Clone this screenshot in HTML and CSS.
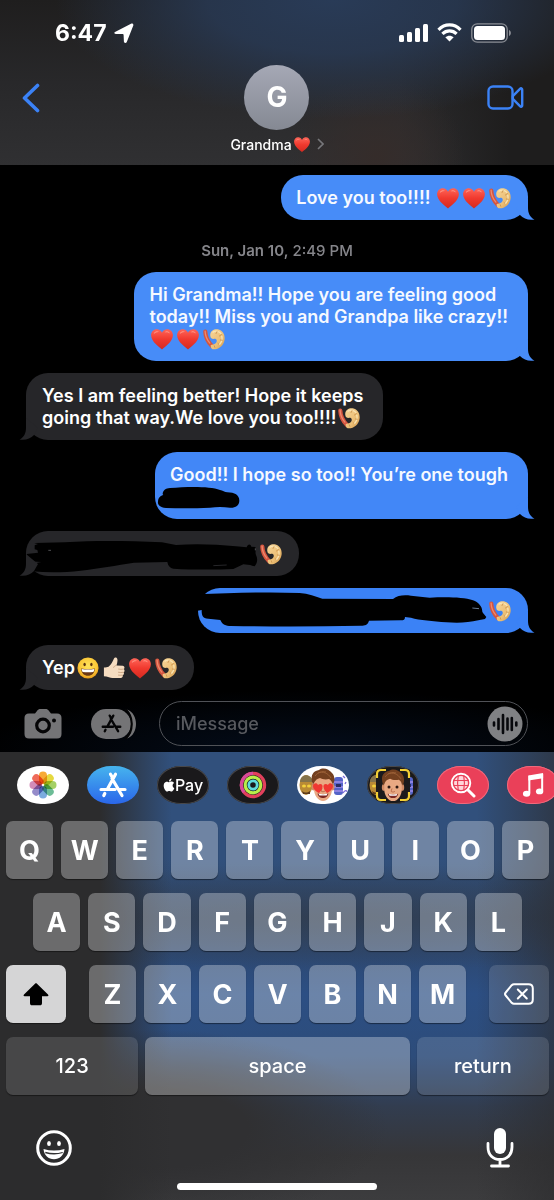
FILE: index.html
```html
<!DOCTYPE html>
<html lang="en">

<head>
	<meta charset="utf-8">
	<meta name="viewport" content="width=device-width, initial-scale=1">
	<title>Grandma</title>
	<link rel="stylesheet" href="styles.css">
</head>

<body>

	<!-- shared shapes -->
	<svg class="defs" width="0" height="0" aria-hidden="true">
		<defs>
			<linearGradient id="heart_fill" x1="0" y1="0" x2="0" y2="1">
				<stop offset="0" stop-color="#ff6558"/>
				<stop offset=".5" stop-color="#f0392e"/>
				<stop offset="1" stop-color="#d42a20"/>
			</linearGradient>
			<linearGradient id="shrimp_fill" x1="0" y1="0" x2="1" y2="1">
				<stop offset="0" stop-color="#f6d598"/>
				<stop offset=".6" stop-color="#ecbf76"/>
				<stop offset="1" stop-color="#d09648"/>
			</linearGradient>
			<radialGradient id="smile_fill" cx=".5" cy=".4" r=".6">
				<stop offset="0" stop-color="#ffe45c"/>
				<stop offset=".7" stop-color="#fbc736"/>
				<stop offset="1" stop-color="#e89a1c"/>
			</radialGradient>
		</defs>
		<symbol id="heart" viewBox="0 0 24 24">
			<path d="M12 23.500C9.500 21 .3 15.500.1 8 0 4 2.900 1.300 6.300 1.300c2.600 0 4.700 1.400 5.700 3.800 1-2.400 3.100-3.800 5.700-3.800 3.400 0 6.300 2.700 6.200 6.700-.2 7.500-9.400 13-11.900 15.500z" fill="url(#heart_fill)"/>
			<path d="M3 6.500C3.700 3.800 6.500 2.800 8.800 4.400 6.200 4.200 4.600 5 3 6.500zM14.800 4.800c2-2 4.800-1.300 5.800 1.200-1.600-1.400-3.600-1.700-5.800-1.200z" fill="#ff9c8c"/>
		</symbol>
		<symbol id="shrimp" viewBox="0 0 24 24">
			<path d="M2.500 4c.2 6 3 11.500 7.500 16" fill="none" stroke="#d4553f" stroke-width="4.600" stroke-linecap="round"/>
			<path d="M2.300 3.500c.2 5 2.200 9.500 5.200 13" fill="none" stroke="#ee8a6e" stroke-width="1.400" stroke-linecap="round"/>
			<path d="M8 9C7 3 12.500.5 17 1.500c5 1.300 7.300 6.500 6.500 11.500-1 6-6 10.200-11.500 10.300-2.600 0-4-2-3.500-4.800 3.500 0 6.500-1.500 6.500-4.500 0-2-2-2.500-3.500-2C9.500 12 8.200 11 8 9z" fill="url(#shrimp_fill)"/>
			<path d="M11 4.500c3-2 7-1 8.500 1.500M20.500 9c.8 3-.2 6.500-2.500 9" fill="none" stroke="#fae5b4" stroke-width="1.400" stroke-linecap="round"/>
			<path d="M15.500 3.500l-1.500 3M20.500 7l-3 2M21.500 13.500l-3-.5M18 18.500l-2-2M13 21.500l-.8-2.500" stroke="#c68c46" stroke-width=".8" fill="none"/>
		</symbol>
		<symbol id="smile" viewBox="0 0 24 24">
			<circle cx="12" cy="12" r="11.500" fill="url(#smile_fill)"/>
			<ellipse cx="8.300" cy="8.300" rx="1.300" ry="1.900" fill="#5c3210"/>
			<ellipse cx="15.700" cy="8.300" rx="1.300" ry="1.900" fill="#5c3210"/>
			<path d="M4.500 12.500c5 1 10 1 15 0C19.500 17.500 16 20.500 12 20.500S4.500 17.500 4.500 12.500z" fill="#6b3714"/>
			<path d="M5 13c5 1 9 1 14 0-.1 1.400-.6 2.500-1.200 3.300-3.500.6-8 .6-11.600 0C5.500 15.500 5.100 14.400 5 13z" fill="#fff"/>
		</symbol>
		<symbol id="thumb" viewBox="0 0 24 24">
			<path d="M1 11.500C3 11.300 5 11 6 10.500 9 8 10.500 5 12 1.500c.7-1.400 3-1.200 3.600.6.600 2.300-.2 4.800-.9 7.100l6.800.4c2 .2 2.600 2.600 1.100 3.600 1.300 1 1.200 2.900-.2 3.500.9 1.200.4 2.700-1 3.100.6 1.400-.2 2.900-1.900 3-4.500.3-9.500.3-13-.8-2-.6-3.800-.9-5.500-.9z" fill="#f5dcc0"/>
			<path d="M22.600 13.200c-2 .4-4 .3-6-.1M22.400 16.700c-2 .4-4 .3-6-.1M21.400 19.800c-2 .3-3.500.2-5-.1M14.700 9.200c-1.600.2-2.700 1-3.200 2.500" stroke="#c79f7c" stroke-width=".9" fill="none"/>
		</symbol>
		<symbol id="tail" viewBox="0 0 24 22">
			<path d="M16 0v10c0 5 2 9.500 6.500 11.500-5.500 1-11-.5-14.500-4.500L4 10z"/>
		</symbol>
		<symbol id="store_a" viewBox="0 0 28 26">
			<g fill="none" stroke="currentColor" stroke-width="3.200" stroke-linecap="round">
				<path d="M11.500 2.200l1.800 3M16.500 2.200L8.500 17M13 6.500l10 17M2 17.500h14M20.500 17.500H26M5.800 21.500l-1 2"/>
			</g>
		</symbol>
		<symbol id="memoji_friends" viewBox="0 0 52 38">
			<ellipse cx="9" cy="19" rx="6.500" ry="10" fill="#b98a35"/>
			<path d="M3 16c0-9 12-9 13 0z" fill="#85734a"/>
			<ellipse cx="7" cy="20" rx="2" ry="1.600" fill="#f3d03c"/>
			<ellipse cx="12" cy="20" rx="2" ry="1.600" fill="#f3d03c"/>
			<path d="M5 25c3 2 5 2 8 0v3H6z" fill="#5b3a1c"/>
			<rect x="37" y="11" width="9" height="18" rx="3" fill="#5463c7"/>
			<path d="M37 16h9M37 21h9M37 25h9" stroke="#9f8ce8" stroke-width="1.500"/>
			<path d="M39 18h5v3h-5z" fill="#2a2c60"/>
		</symbol>
		<symbol id="memoji" viewBox="0 0 26 34">
			<ellipse cx="3.500" cy="19" rx="2" ry="3.500" fill="#d28b65"/>
			<ellipse cx="22.500" cy="19" rx="2" ry="3.500" fill="#d28b65"/>
			<path d="M4 12c0-5 18-5 18 0v9c0 6-4 12-9 12S4 27 4 21z" fill="#e9a983"/>
			<path d="M3 17C0 9 2 3 9 2c4-3 10-1 13 3 3 3 3 8 1 12-1-3-2-5-4-6-4 1-7 0-9-1-4 1-5 3-7 7z" fill="#74401f"/>
			<path d="M5 8c3-4 7-5 11-4M8 5c5-2 10 0 13 5" stroke="#9b6037" stroke-width="1" fill="none"/>
			<path d="M12 20l-1 3c1 1 3 1 4 0" stroke="#bd704e" stroke-width="1" fill="none"/>
			<path d="M7.500 25.500c4 1 7 1 11 0-1 3.500-3 4.500-5.500 4.500s-4.500-1-5.500-4.500z" fill="#7b2723"/>
			<path d="M8.500 25.800c3 .6 6 .6 9 0l-1 1.800h-7z" fill="#fff"/>
		</symbol>
	</svg>

	<div class="phone">

		<header class="header">
			<div class="status">
				<span class="clock">6:47</span>
				<svg width="20" height="20" viewBox="0 0 20 20" aria-label="Location in use"><path d="M1.500 8.800L17 .8c1.600-.8 2.800.4 2.200 2l-6.300 16c-.7 1.700-2.900 1.500-3-.3l-.3-6.600c0-.6-.3-.9-.9-.9l-6.900-.1c-1.900-.1-2-1.500-.3-2.100z" fill="#fff"/></svg>
				<div class="status_icons">
					<svg width="29" height="18" viewBox="0 0 29 18" fill="#fff" aria-label="Signal">
						<rect x="0" y="11" width="5" height="7" rx="1.500"/>
						<rect x="8" y="8" width="5" height="10" rx="1.500"/>
						<rect x="16" y="4" width="5" height="14" rx="1.500"/>
						<rect x="24" y="0" width="5" height="18" rx="1.500"/>
					</svg>
					<svg width="25" height="19" viewBox="0 0 25 19" aria-label="Wi-Fi">
						<path d="M1.500 6.800C7.800.3 17.200.3 23.500 6.800M5.400 10.800c4.100-4 10.100-4 14.200 0" fill="none" stroke="#fff" stroke-width="3.200"/>
						<path d="M12.500 18.600l-4.200-4.300c2.400-2.100 6-2.100 8.400 0z" fill="#fff"/>
					</svg>
					<svg width="41" height="20" viewBox="0 0 41 20" aria-label="Battery">
						<rect x=".8" y=".8" width="35.400" height="18.400" rx="5.500" fill="none" stroke="#8b8e95" stroke-width="1.300"/>
						<rect x="3" y="3" width="31" height="14" rx="3.500" fill="#fff"/>
						<path d="M38 7c2.500.8 2.500 5.200 0 6z" fill="#8b8e95"/>
					</svg>
				</div>
			</div>
			<nav class="nav">
				<button class="nav_button" aria-label="Back">
					<svg width="18" height="30" viewBox="0 0 18 30"><path d="M15.500 2.500L2.500 15l13 12.500" fill="none" stroke="#3b82f6" stroke-width="3.600" stroke-linecap="round" stroke-linejoin="round"/></svg>
				</button>
				<button class="contact">
					<span class="avatar">G</span>
					<span class="contact_name">Grandma<svg class="emoji_small" role="img" aria-label="red heart"><use href="#heart"/></svg>
						<svg class="chevron" width="7" height="12" viewBox="0 0 7 12"><path d="M1 1l5 5-5 5" fill="none" stroke="#77777b" stroke-width="1.600"/></svg>
					</span>
				</button>
				<button class="nav_button end" aria-label="FaceTime">
					<svg width="37" height="25" viewBox="0 0 37 25" fill="none" stroke="#3b82f6" stroke-width="2.400" stroke-linejoin="round"><rect x="1.500" y="1.500" width="24" height="22" rx="4.500"/><path d="M25.800 11.200l7.200-7.400c1-1 2.200-.5 2.200.8v15.800c0 1.300-1.200 1.800-2.200.8l-7.200-7.400z"/></svg>
				</button>
			</nav>
		</header>

		<main class="chat">
			<div class="bubble sent emoji_end">Love you too!!!! <svg class="emoji" role="img" aria-label="red heart"><use href="#heart"/></svg><svg class="emoji" role="img" aria-label="red heart"><use href="#heart"/></svg><svg class="emoji" role="img" aria-label="shrimp"><use href="#shrimp"/></svg><svg class="tail"><use href="#tail"/></svg></div>

			<div class="stamp"><b>Sun, Jan 10,</b> 2:49 PM</div>

			<div class="bubble sent">Hi Grandma!! Hope you are feeling good<br>today!! Miss you and Grandpa like crazy!!<br><svg class="emoji" role="img" aria-label="red heart"><use href="#heart"/></svg><svg class="emoji" role="img" aria-label="red heart"><use href="#heart"/></svg><svg class="emoji" role="img" aria-label="shrimp"><use href="#shrimp"/></svg><svg class="tail"><use href="#tail"/></svg></div>

			<div class="bubble received">Yes I am feeling better! Hope it keeps<br>going that way.We love you too!!!!<svg class="emoji" role="img" aria-label="shrimp"><use href="#shrimp"/></svg><svg class="tail"><use href="#tail"/></svg></div>

			<div class="bubble sent mid">Good!! I hope so too!! You’re one tough<br><span class="hidden_text"></span>
				<svg class="scribble" width="375" height="67" viewBox="39 21 1125 201"><path d="M62 148c0-12 9-18 22-19 50-4 120-6 150 6 8 2 14 6 22 7 22 0 36 8 36 25 0 14-12 22-28 21-20-3-40-3-60 0-44 2-88 2-132 1-18-1-26-10-24-20 1-12 8-17 16-19z"/></svg>
				<svg class="tail"><use href="#tail"/></svg></div>

			<div class="bubble received emoji_end"><span class="hidden_text short"></span><svg class="emoji" role="img" aria-label="shrimp"><use href="#shrimp"/></svg>
				<svg class="scribble" width="274" height="45" viewBox="78 18 822 135"><path d="M104 54l90-2c100-6 190-4 292 0l42 8c60-4 120-2 180 4l32 3c4-12 12-10 14-2l12 1c4 10-2 14 2 24 6 12 4 24-4 34-6 0-10-4-14-4l-20-2-30 14c-60 3-130 2-180-1-10-2-16-8-18-20l-100 2c-50 8-110 18-160 24-50 6-100 6-146 2-20-2-18-18-2-22l30-6-44-2v-22l34-4-2-8-8-2v-12l10-4-10-2z"/><path d="M640 122l40-2" stroke="#262629" stroke-width="3"/><path d="M145 76h8M766 70v6" stroke="#77777b" stroke-width="2"/></svg>
				<svg class="tail"><use href="#tail"/></svg></div>

			<div class="bubble sent low emoji_end"><span class="hidden_text long"></span><svg class="emoji" role="img" aria-label="shrimp"><use href="#shrimp"/></svg>
				<svg class="scribble" width="330" height="45" viewBox="55 25 990 135"><path d="M50 44c110-4 210-8 310-4 26 2 48 10 68 17l212 1c14-12 34-12 54-10l56 6c50-2 100-2 130 8 16 6 28 18 28 34l2 4 10 12-4 6-20 4c-30 8-66 8-96 6-40-4-80-6-106-14l-18-2c0 8-4 10-12 10l-96 1c-4 14-12 14-24 15-130 3-260 3-390 1-16 0-26-4-32-18l-36-4c-18 0-20-10-20-26l-12 2z"/><path d="M878 85l20 2" stroke="#9db9dc" stroke-width="2"/></svg>
				<svg class="tail"><use href="#tail"/></svg></div>

			<div class="bubble received emoji_end">Yep<svg class="emoji" role="img" aria-label="grinning face"><use href="#smile"/></svg><svg class="emoji" role="img" aria-label="thumbs up"><use href="#thumb"/></svg><svg class="emoji" role="img" aria-label="red heart"><use href="#heart"/></svg><svg class="emoji" role="img" aria-label="shrimp"><use href="#shrimp"/></svg><svg class="tail"><use href="#tail"/></svg></div>
		</main>

		<form class="composer" onsubmit="return false">
			<button class="plain" type="button" aria-label="Camera">
				<svg width="38" height="30" viewBox="0 0 38 30"><path d="M5 4.500h6l2-2.500c1-1.500 2-2 3.500-2h5c1.500 0 2.500.5 3.500 2l2 2.500h6c3 0 4.500 1.500 4.500 4.500v16c0 3-1.500 4.500-4.500 4.500H5C2 29.500.5 28 .5 25V9C.5 6 2 4.500 5 4.500z" fill="#747476"/><circle cx="19" cy="16.500" r="6.300" fill="none" stroke="#050506" stroke-width="3.200"/><circle cx="30" cy="11.500" r="2" fill="#050506"/></svg>
			</button>
			<button class="plain" type="button" aria-label="Apps">
				<svg class="apps_icon" width="46" height="30" viewBox="0 0 46 30"><rect x="0" y="0" width="40" height="30" rx="15" fill="#747476"/><path d="M36 0.500c12 4 12 25 0 29 7-8 7-21 0-29z" fill="#747476"/><path d="M34 0c9 7 9 23 0 30" fill="none" stroke="#050506" stroke-width="2"/><use href="#store_a" x="10" y="5" width="21" height="19"/></svg>
			</button>
			<label class="message_box">
				<input class="message_input" type="text" placeholder="iMessage" aria-label="iMessage">
				<button class="plain" type="button" aria-label="Record audio">
					<svg width="36" height="36" viewBox="0 0 36 36"><circle cx="18" cy="18" r="17.500" fill="#808184"/><path d="M7 16.500v3M11.500 13v10M16 9v18M20.500 12.500v11M24.800 12v12M29.300 16.500v3" stroke="#07080c" stroke-width="2.600" stroke-linecap="round"/></svg>
				</button>
			</label>
		</form>

		<section class="keyboard">
			<div class="apps">
				<button class="app white" aria-label="Photos">
					<svg width="28" height="28" viewBox="-14 -14 28 28" class="petals">
						<rect x="-4" y="-13.500" width="8" height="12.500" rx="4" fill="#f7a11d"/>
						<rect x="-4" y="-13.500" width="8" height="12.500" rx="4" fill="#e3d52b" transform="rotate(45)"/>
						<rect x="-4" y="-13.500" width="8" height="12.500" rx="4" fill="#9bcb55" transform="rotate(90)"/>
						<rect x="-4" y="-13.500" width="8" height="12.500" rx="4" fill="#5cb58b" transform="rotate(135)"/>
						<rect x="-4" y="-13.500" width="8" height="12.500" rx="4" fill="#6ea3dc" transform="rotate(180)"/>
						<rect x="-4" y="-13.500" width="8" height="12.500" rx="4" fill="#8a80c4" transform="rotate(225)"/>
						<rect x="-4" y="-13.500" width="8" height="12.500" rx="4" fill="#cf7fb1" transform="rotate(270)"/>
						<rect x="-4" y="-13.500" width="8" height="12.500" rx="4" fill="#ee5b48" transform="rotate(315)"/>
					</svg>
				</button>
				<button class="app store" aria-label="App Store"><svg width="28" height="26"><use href="#store_a"/></svg></button>
				<button class="app dark"><svg width="12" height="14" viewBox="1 0 22 24" aria-label="Apple"><path fill="#fff" d="M12.152 6.896c-.948 0-2.415-1.078-3.960-1.040-2.040.027-3.910 1.183-4.961 3.014-2.117 3.675-.546 9.103 1.519 12.090 1.013 1.454 2.208 3.090 3.792 3.039 1.520-.065 2.090-.987 3.935-.987 1.831 0 2.350.987 3.960.948 1.637-.026 2.676-1.480 3.676-2.948 1.156-1.688 1.636-3.325 1.662-3.415-.039-.013-3.182-1.221-3.220-4.857-.026-3.040 2.480-4.494 2.597-4.559-1.429-2.090-3.623-2.324-4.390-2.376-2-.156-3.675 1.090-4.610 1.090zM15.530 3.830c.843-1.012 1.400-2.427 1.245-3.830-1.207.052-2.662.805-3.532 1.818-.780.896-1.454 2.338-1.273 3.714 1.338.104 2.715-.688 3.559-1.701"/></svg>Pay</button>
				<button class="app dark" aria-label="Fitness">
					<svg width="28" height="28" viewBox="0 0 28 28" fill="none" stroke-width="3.200"><circle cx="14" cy="14" r="11.600" stroke="#e2405c"/><path d="M5 21.300A11.600 11.600 0 0 1 14 2.400" stroke="#d84a9a"/><circle cx="14" cy="14" r="7.800" stroke="#b9ee4a"/><circle cx="14" cy="14" r="4.200" stroke="#5fdcdc" stroke-width="2.800"/></svg>
				</button>
				<button class="app white" aria-label="Memoji stickers">
					<svg width="52" height="38" viewBox="0 0 52 38"><use href="#memoji_friends"/><path d="M46 10l2 2M49 16l-1 2M46 27c2-3 4-3 4-1" stroke="#7c6bd8" stroke-width="1.300" fill="none"/><use href="#memoji" x="13" y="2" width="26" height="34"/><path d="M22 27c-3-1.500-6-4-6-7 0-3 4-4 5-1 2-2 5-1 4.500 2-.3 2.500-2 4.500-3.500 6zM30 27c3-1.500 6-4 6-7 0-3-4-4-5-1-2-2-5-1-4.500 2 .3 2.500 2 4.500 3.500 6z" fill="#ef3832"/></svg>
				</button>
				<button class="app dark" aria-label="Memoji">
					<svg width="52" height="38" viewBox="0 0 52 38"><use href="#memoji_friends"/><rect x="9" y="3" width="34" height="32" fill="#1b1a1c"/><use href="#memoji" x="13" y="3" width="26" height="33"/><circle cx="22" cy="21" r="1.500" fill="#2c1711"/><circle cx="30" cy="21" r="1.500" fill="#2c1711"/><path d="M10 12V8c0-3 1.500-4 4-4h5M33 4h5c2.500 0 4 1 4 4v4M42 26v4c0 3-1.500 4-4 4h-5M19 34h-5c-2.500 0-4-1-4-4v-4" fill="none" stroke="#f3cf35" stroke-width="2.200"/></svg>
				</button>
				<button class="app red" aria-label="Images">
					<svg width="26" height="26" viewBox="0 0 26 26" fill="none" stroke="#fff"><circle cx="11" cy="11" r="9.300" stroke-width="1.900"/><path d="M18 18l6 6" stroke-width="3" stroke-linecap="round"/><circle cx="11" cy="11" r="7" fill="#ffd5da" stroke="none"/><path d="M3.500 8.500h15M3.500 13.500h15M8.300 3.500c-1 5-1 10 0 15M13.700 3.500c1 5 1 10 0 15" stroke="#ea4059" stroke-width="1.200"/></svg>
				</button>
				<button class="app red" aria-label="Music">
					<svg width="22" height="26" viewBox="0 0 24 28"><path d="M8 4v19M22 2v18.500" fill="none" stroke="#fff" stroke-width="2.200"/><path d="M7 3.500L23 1v5.500L7 9z" fill="#fff"/><ellipse cx="5" cy="23.500" rx="4" ry="3.200" fill="#fff"/><ellipse cx="19.200" cy="21" rx="4" ry="3.200" fill="#fff"/></svg>
				</button>
			</div>

			<div class="keys">
				<div class="row">
					<button class="key">Q</button>
					<button class="key">W</button>
					<button class="key">E</button>
					<button class="key">R</button>
					<button class="key">T</button>
					<button class="key">Y</button>
					<button class="key">U</button>
					<button class="key">I</button>
					<button class="key">O</button>
					<button class="key">P</button>
				</div>
				<div class="row inset">
					<button class="key">A</button>
					<button class="key">S</button>
					<button class="key">D</button>
					<button class="key">F</button>
					<button class="key">G</button>
					<button class="key">H</button>
					<button class="key">J</button>
					<button class="key">K</button>
					<button class="key">L</button>
				</div>
				<div class="row">
					<button class="key side shift" aria-label="Shift"><svg width="26" height="23" viewBox="0 0 26 23"><path d="M12 .8c.6-.6 1.400-.6 2 0l11 10.800c.8.900.5 1.700-.6 1.700H19V20c0 1.600-.6 2.300-2.200 2.300H9.200C7.600 22.300 7 21.600 7 20v-6.700H1.600c-1.100 0-1.400-.8-.6-1.700z"/></svg></button>
					<div class="row letters">
						<button class="key">Z</button>
						<button class="key">X</button>
						<button class="key">C</button>
						<button class="key">V</button>
						<button class="key">B</button>
						<button class="key">N</button>
						<button class="key">M</button>
					</div>
					<button class="key side gray" aria-label="Delete"><svg width="30" height="22" viewBox="0 0 30 22" fill="none" stroke="#fff" stroke-width="2" stroke-linejoin="round" stroke-linecap="round"><path d="M10 1.200h14.500c2.800 0 4.300 1.500 4.300 4.300v11c0 2.800-1.500 4.300-4.300 4.300H10c-1 0-1.600-.3-2.300-1L1.700 12.500c-.8-.9-.8-2.100 0-3l6-7.300c.7-.7 1.300-1 2.300-1z"/><path d="M13.800 6.500l9 9M22.800 6.500l-9 9"/></svg></button>
				</div>
				<div class="row tight">
					<button class="key word gray">123</button>
					<button class="key word space">space</button>
					<button class="key word gray">return</button>
				</div>
			</div>

			<div class="tools">
				<button class="plain" aria-label="Emoji keyboard">
					<svg width="36" height="36" viewBox="0 0 36 36"><circle cx="18" cy="18" r="16.300" fill="none" stroke="#fff" stroke-width="3"/><ellipse cx="13" cy="13.500" rx="1.900" ry="2.600" fill="#fff"/><ellipse cx="23" cy="13.500" rx="1.900" ry="2.600" fill="#fff"/><path d="M7.500 19c7 2 14 2 21 0-.5 6.500-5 10.300-10.500 10.300S8 25.500 7.500 19z" fill="#fff"/><path d="M9.300 22.500c6 1.700 11.500 1.700 17.400 0" stroke="#323233" stroke-width="1.300" fill="none"/></svg>
				</button>
				<button class="plain" aria-label="Dictate">
					<svg width="28" height="40" viewBox="0 0 28 40"><rect x="8" y="0" width="12" height="26" rx="6" fill="#fff"/><path d="M2 15.500V19c0 8 5 12.500 12 12.500S26 27 26 19v-3.500M14 32v6M5.500 38h17" fill="none" stroke="#fff" stroke-width="2.800" stroke-linecap="round"/></svg>
				</button>
			</div>
			<div class="home_bar"></div>
		</section>

	</div>

</body>
</html>
```

FILE: styles.css
```css
* {
	box-sizing: border-box;
}
body {
	margin: 0;
	background: #000;
	color: #fff;
	font-family: Inter, "Liberation Sans", sans-serif;
}
button {
	font-family: inherit;
	color: inherit;
	border: 0;
	padding: 0;
	background: none;
	cursor: pointer;
}
svg {
	display: block;
	flex-shrink: 0;
}
.defs {
	position: absolute;
}
.phone {
	display: flex;
	flex-direction: column;
	min-height: 100vh;
	overflow: hidden;
}

/* header */
.header {
	background:
		radial-gradient(ellipse 50% 72% at 60% 0, #293b57 0, #293b57cc 45%, #293b5700 100%),
		radial-gradient(ellipse 16% 50% at 68% 95%, #352c2a 0, #352c2a00 100%),
		linear-gradient(90deg, #1e1d1d00 72%, #1e1d1d 92%),
		linear-gradient(#1f1e1e, #28282a 50%, #303032);
}
.status {
	display: flex;
	align-items: center;
	height: 65px;
	padding: 0 42px 0 55px;
}
.clock {
	font-size: 23px;
	font-weight: 700;
	margin-right: 7px;
}
.status_icons {
	display: flex;
	align-items: center;
	gap: 9px;
	margin-left: auto;
}
.nav {
	display: grid;
	grid-template-columns: 1fr auto 1fr;
	align-items: start;
	padding: 0 22px 11px;
}
.nav_button {
	display: flex;
	align-items: center;
	height: 65px;
}
.end {
	justify-content: flex-end;
	padding-right: 8px;
}
.contact {
	display: flex;
	flex-direction: column;
	align-items: center;
}
.avatar {
	width: 65px;
	height: 65px;
	border-radius: 50%;
	background: linear-gradient(#a5a8b5, #858993);
	font-size: 28px;
	font-weight: 700;
	line-height: 65px;
}
.contact_name {
	display: flex;
	align-items: center;
	height: 20px;
	margin-top: 4px;
	font-size: 14px;
	font-weight: 500;
}
.emoji_small {
	width: 16px;
	height: 17px;
	margin-left: 2px;
}
.chevron {
	margin-left: 7px;
}

/* messages */
.chat {
	display: flex;
	flex-direction: column;
	gap: 12px;
	padding: 10px 26px 0;
}
.bubble {
	position: relative;
	padding: 12px 20px 11px 15px;
	border-radius: 22px;
	font-size: 18px;
	font-weight: 600;
	line-height: 22px;
	white-space: nowrap;
}
.sent {
	align-self: flex-end;
	background: #478cf8;
	color: #f6f9ff;
}
.mid {
	background: #4287f7;
}
.low {
	background: #3b82f6;
}
.received {
	align-self: flex-start;
	padding-left: 16px;
	background: #262629;
}
.emoji_end {
	padding-right: 15px;
}
.emoji {
	display: inline-block;
	width: 22px;
	height: 22px;
	margin: 0 2px;
	vertical-align: top;
}
.tail {
	position: absolute;
	bottom: 0;
	width: 24px;
	height: 22px;
}
.sent .tail {
	right: -8px;
	fill: #478cf8;
}
.mid .tail {
	fill: #4287f7;
}
.low .tail {
	fill: #3b82f6;
}
.received .tail {
	left: -8px;
	fill: #262629;
	transform: scaleX(-1);
}
.scribble {
	position: absolute;
	top: 0;
	left: 0;
	overflow: visible;
}
.hidden_text {
	display: inline-block;
	height: 22px;
	vertical-align: top;
}
.short {
	width: 216px;
}
.long {
	width: 274px;
}
.stamp {
	padding-top: 10px;
	color: #85858a;
	font-size: 15px;
	line-height: 18px;
	text-align: center;
	font-weight: 500;
}
.stamp b {
	font-weight: 600;
}

/* message field */
.composer {
	display: flex;
	align-items: center;
	padding: 11px 26px 6px 24px;
	background: radial-gradient(ellipse 60% 100% at 55% 100%, #040d1c, #000);
}
.plain {
	display: block;
}
.apps_icon {
	margin: 0 22px 0 29px;
	color: #050506;
}
.message_box {
	display: flex;
	flex: 1;
	align-items: center;
	height: 45px;
	padding: 0 4px 0 16px;
	border: 1px solid #505257;
	border-radius: 23px;
}
.message_input {
	flex: 1;
	min-width: 0;
	border: 0;
	padding: 0;
	outline: 0;
	background: none;
	color: #fff;
	font-family: inherit;
	font-size: 18px;
	font-weight: 500;
}
.message_input::placeholder {
	color: #57595e;
	opacity: 1;
}

/* keyboard */
.keyboard {
	flex: 1;
	padding-bottom: 10px;
	background:
		linear-gradient(90deg, #2c2c2d 18%, #2c2c2d00 31%),
		linear-gradient(90deg, #2c2c2e00 86%, #2c2c2e 108%),
		radial-gradient(ellipse 75% 12% at 60% 37%, #323c4aaa 0, #323c4a00 100%),
		radial-gradient(ellipse 42% 22% at 28% 84%, #303032 40%, #30303200 100%),
		linear-gradient(#31507c 0, #31507c 24%, #2e4363 37%, #2c4f84 54%, #2d4c7a 68%, #323d50 79%, #363638 90%, #3c3c3e 100%);
}
.apps {
	display: flex;
	gap: 18px;
	padding: 14px 0 17px 17px;
	overflow: hidden;
}
.app {
	display: flex;
	flex: 0 0 52px;
	align-items: center;
	justify-content: center;
	height: 38px;
	border-radius: 24px / 19px;
	overflow: hidden;
	font-size: 16px;
	font-weight: 500;
}
.white {
	background: #fff;
}
.store {
	background: linear-gradient(#46b4ee, #2a66ea);
}
.dark {
	background: #1a191b;
	box-shadow: inset 0 0 0 1px #48484a;
}
.red {
	background: #ea4059;
	box-shadow: inset 0 0 0 1px #f06a7d;
}
.petals rect {
	mix-blend-mode: multiply;
	opacity: .9;
}
.keys {
	display: grid;
	gap: 14px;
	padding: 0 5px 0 6px;
}
.row {
	display: flex;
	gap: 8px;
	justify-content: space-between;
}
.inset {
	padding: 0 27px;
}
.letters {
	flex: 1;
	padding: 0 15px;
}
.tight {
	gap: 7px;
}
.key {
	display: flex;
	flex: 1 1 0;
	min-width: 0;
	align-items: center;
	justify-content: center;
	height: 58px;
	border-radius: 7px;
	background: rgba(255, 255, 255, .3);
	box-shadow: 0 1px 1px rgba(0, 0, 0, .45);
	font-size: 27px;
	font-weight: 700;
}
.side {
	flex: 0 0 60px;
}
.shift {
	background: #d5d5d6;
}
.gray {
	background: rgba(255, 255, 255, .13);
}
.word {
	font-size: 20px;
	font-weight: 500;
}
.space {
	flex-grow: 2;
	background: rgba(255, 255, 255, .3);
}
.tools {
	display: flex;
	align-items: center;
	justify-content: space-between;
	height: 42px;
	margin-top: 32px;
	padding: 0 40px 0 36px;
}
.home_bar {
	width: 36%;
	height: 7px;
	margin: 14px auto 0;
	border-radius: 4px;
	background: #fff;
}
```
